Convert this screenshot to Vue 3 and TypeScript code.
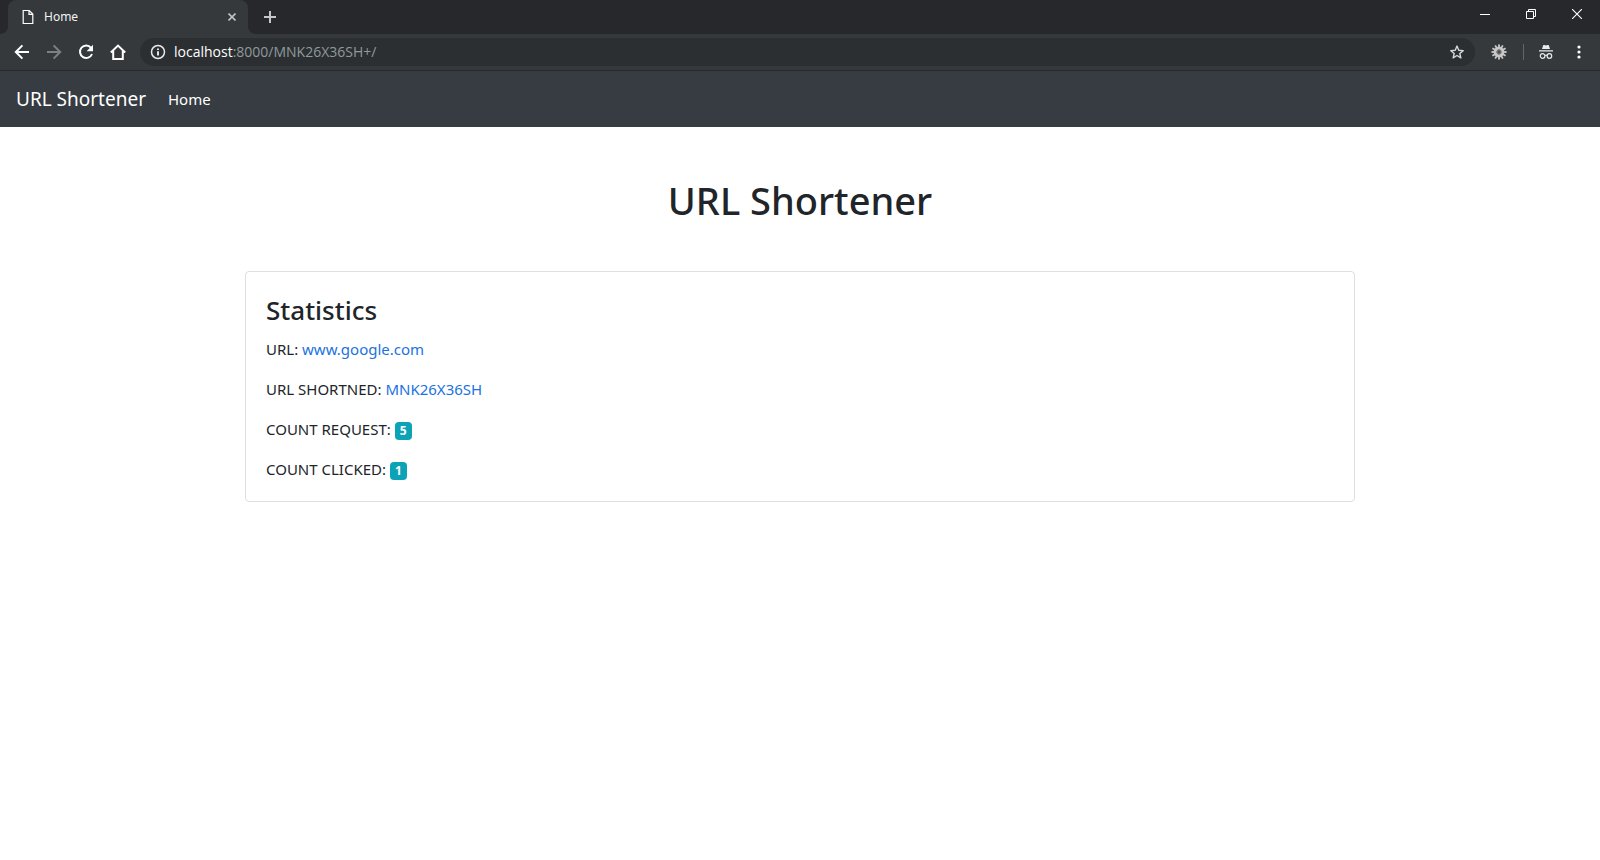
<script setup lang="ts">
import { ref } from 'vue'

interface Stat {
  label: string
  link?: string
  count?: number
}

const host = 'localhost'
const path = ':8000/MNK26X36SH+/'
const address = ref(host + path)

const stats: Stat[] = [
  { label: 'URL:', link: 'www.google.com' },
  { label: 'URL SHORTNED:', link: 'MNK26X36SH' },
  { label: 'COUNT REQUEST:', count: 5 },
  { label: 'COUNT CLICKED:', count: 1 },
]

const gearTeeth = Array.from({ length: 12 }, (_, i) => i * 30)
</script>

<template>
  <div class="browser">
    <header class="chrome">
      <div class="tab-strip">
        <div class="tab">
          <svg class="page-icon" width="12" height="16" viewBox="0 0 12 16" fill="none" stroke="#fff" stroke-width="1.2">
            <path d="M1.2 1.5h6l3.6 3.6v9.4H1.2zM7 1.5v3.8h3.8" />
          </svg>
          <span class="tab-title">Home</span>
          <button class="icon-button tab-close" aria-label="Close tab">
            <svg width="8" height="8" viewBox="0 0 8 8" stroke="#bfc2c5" stroke-width="1.6"><path d="M.5 .5l7 7M7.5 .5L.5 7.5" /></svg>
          </button>
        </div>
        <button class="icon-button new-tab" aria-label="New tab">
          <svg width="12" height="12" viewBox="0 0 12 12" stroke="#c5c8ca" stroke-width="2"><path d="M6 0v12M0 6h12" /></svg>
        </button>
        <div class="window-controls">
          <button class="icon-button" aria-label="Minimize">
            <svg width="10" height="10" viewBox="0 0 10 10" fill="none" stroke="#fff"><path d="M0 5.5h10" /></svg>
          </button>
          <button class="icon-button" aria-label="Restore">
            <svg width="10" height="10" viewBox="0 0 10 10" fill="none" stroke="#fff"><path d="M.5 2.5h7v7h-7zM2.5 2.5v-2h7v7h-2" /></svg>
          </button>
          <button class="icon-button" aria-label="Close">
            <svg width="10" height="10" viewBox="0 0 10 10" fill="none" stroke="#fff" stroke-width="1.1"><path d="M0 0l10 10M10 0L0 10" /></svg>
          </button>
        </div>
      </div>

      <div class="toolbar">
        <nav class="history" aria-label="Browser navigation">
          <button class="icon-button" aria-label="Back">
            <svg width="16" height="16" viewBox="0 0 16 16" fill="none" stroke="#fff" stroke-width="2"><path d="M15 8H2.4M8.4 1.4L1.8 8l6.6 6.6" /></svg>
          </button>
          <button class="icon-button" aria-label="Forward" disabled>
            <svg width="16" height="16" viewBox="0 0 16 16" fill="none" stroke="#7d8184" stroke-width="2"><path d="M1 8h12.6M7.6 1.4L14.2 8l-6.6 6.6" /></svg>
          </button>
          <button class="icon-button" aria-label="Reload">
            <svg width="16" height="16" viewBox="0 0 16 16" fill="none">
              <path d="M13 3.8A6.2 6.2 0 1 0 14 10" stroke="#fff" stroke-width="2" />
              <path d="M15 .8v6.4H8.6z" fill="#fff" />
            </svg>
          </button>
          <button class="icon-button" aria-label="Home page">
            <svg width="16" height="16" viewBox="0 0 16 16" fill="none" stroke="#fff" stroke-width="2"><path d="M.8 8.4L8 1.6l7.2 6.8M3.2 7v8h9.6V7" /></svg>
          </button>
        </nav>

        <div class="omnibox">
          <svg class="info-icon" width="16" height="16" viewBox="0 0 16 16" fill="none" stroke="#e8eaed">
            <circle cx="8" cy="8" r="6.5" stroke-width="1.5" />
            <path d="M8 7.2v4.2M8 4.4v1.6" stroke-width="1.9" />
          </svg>
          <label class="address">
            <span class="host" aria-hidden="true">{{ host }}</span><span class="path" aria-hidden="true">{{ path }}</span>
            <input v-model="address" class="address-input" type="text" aria-label="Address" />
          </label>
          <button class="icon-button star" aria-label="Bookmark this page">
            <svg width="14" height="14" viewBox="0 0 16 16" fill="none" stroke="#d5d7d9" stroke-width="1.6" stroke-linejoin="round">
              <path d="M8 1.2l2 4.8 5.1.4-3.9 3.3 1.2 5L8 12l-4.4 2.7 1.2-5L.9 6.4 6 6z" />
            </svg>
          </button>
        </div>

        <button class="icon-button gear" aria-label="Extension">
          <svg width="16" height="16" viewBox="0 0 16 16">
            <g fill="#c9c9c9">
              <rect v-for="angle in gearTeeth" :key="angle" x="7.1" y="0.4" width="1.8" height="4" :transform="`rotate(${angle} 8 8)`" />
            </g>
            <circle cx="8" cy="8" r="3.9" fill="none" stroke="#c8c8c8" stroke-width="3" />
            <circle cx="8" cy="8" r="2.2" fill="#4b4e50" stroke="#858789" />
          </svg>
        </button>
        <span class="divider"></span>
        <button class="icon-button incognito" aria-label="Incognito">
          <svg width="14" height="14" viewBox="0 0 14 14">
            <path d="M4.3 0h1.2L7 .6 8.5 0h1.2L11 4H3zM0 5.2h14v1.3H0z" fill="#e8eaed" />
            <g fill="none" stroke="#e8eaed" stroke-width="1.2"><circle cx="3.6" cy="11" r="2.3" /><circle cx="10.4" cy="11" r="2.3" /><path d="M5.9 10.6q1.1-.8 2.2 0" /></g>
          </svg>
        </button>
        <button class="icon-button menu" aria-label="Browser menu">
          <svg width="4" height="14" viewBox="0 0 4 14" fill="#fff"><circle cx="2" cy="2" r="1.6" /><circle cx="2" cy="7" r="1.6" /><circle cx="2" cy="12" r="1.6" /></svg>
        </button>
      </div>
    </header>

    <nav class="navbar" aria-label="Site">
      <a class="brand" href="#">URL Shortener</a>
      <a class="nav-link" href="#">Home</a>
    </nav>

    <main class="container">
      <h1>URL Shortener</h1>
      <section class="card">
        <h2>Statistics</h2>
        <p v-for="stat in stats" :key="stat.label">
          {{ stat.label }}
          <a v-if="stat.link" href="#">{{ stat.link }}</a>
          <span v-else class="badge">{{ stat.count }}</span>
        </p>
      </section>
    </main>
  </div>
</template>

<style>
body {
  background: #fff;
}
</style>

<style scoped>
* {
  box-sizing: border-box;
}

.browser {
  font-family: "Noto Sans", "Open Sans", sans-serif;
  font-size: 15px;
  line-height: 24px;
  color: #212529;
}

a {
  color: #1a73e0;
  text-decoration: none;
}

.icon-button {
  display: flex;
  align-items: center;
  justify-content: center;
  flex: none;
  padding: 0;
  border: 0;
  background: none;
}

.tab-strip {
  display: flex;
  height: 34px;
  padding-left: 8px;
  background: #26282b;
}

.tab {
  position: relative;
  display: flex;
  align-items: center;
  width: 240px;
  padding: 0 10px 0 14px;
  border-radius: 8px 8px 0 0;
  background: #35393c;
}

/* Outward curves at the foot of the active tab */
.tab::before,
.tab::after {
  content: "";
  position: absolute;
  bottom: 0;
  width: 8px;
  height: 8px;
}

.tab::before {
  right: 100%;
  background: radial-gradient(circle at 0 0, transparent 8px, #35393c 8px);
}

.tab::after {
  left: 100%;
  background: radial-gradient(circle at 100% 0, transparent 8px, #35393c 8px);
}

.tab-title {
  flex: 1;
  margin-left: 10px;
  font-size: 12px;
  color: #f1f3f4;
}

.tab-close {
  width: 12px;
  height: 16px;
}

.new-tab {
  width: 28px;
  margin-left: 8px;
}

.window-controls {
  display: flex;
  height: 28px;
  margin-left: auto;
}

.window-controls .icon-button {
  width: 46px;
}

.toolbar {
  display: flex;
  align-items: center;
  height: 37px;
  padding-right: 11px;
  border-bottom: 1px solid #27292c;
  background: #35393c;
}

.history {
  display: flex;
  gap: 16px;
  padding: 0 14px;
}

.omnibox {
  display: flex;
  flex: 1;
  align-items: center;
  height: 28px;
  padding: 0 11px 0 10px;
  border-radius: 14px;
  background: #2b2f31;
}

.address {
  position: relative;
  flex: 1;
  margin-left: 8px;
  font-family: "Open Sans", "Noto Sans", sans-serif;
  font-size: 14px;
  white-space: nowrap;
}

.host {
  color: #fff;
}

.path {
  color: #8f9a9d;
}

.address-input {
  position: absolute;
  inset: 0;
  width: 100%;
  padding: 0;
  border: 0;
  outline: 0;
  background: none;
  font: inherit;
  color: transparent;
}

.gear {
  margin-left: 16px;
}

.divider {
  width: 1px;
  height: 16px;
  margin: 0 15px 0 16px;
  background: #62666a;
}

.menu {
  width: 20px;
  margin-left: 16px;
}

.navbar {
  display: flex;
  align-items: center;
  gap: 22px;
  height: 56px;
  padding: 0 16px;
  background: #363c41;
}

.navbar a {
  color: #fff;
}

.brand {
  font-size: 19px;
}

.container {
  max-width: 1110px;
  margin: 0 auto;
}

h1 {
  margin: 49px 0 47px;
  font-size: 38px;
  font-weight: 500;
  line-height: 48px;
  text-align: center;
}

.card {
  padding: 20px;
  border: 1px solid #dfdfdf;
  border-radius: 4px;
}

h2 {
  margin: 0 0 9px;
  font-size: 26px;
  font-weight: 500;
  line-height: 36px;
}

p {
  margin: 0 0 16px;
}

p:last-child {
  margin: 0;
}

.badge {
  display: inline-block;
  padding: 3px 5px;
  border-radius: 4px;
  background: #0ba3b5;
  font-size: 12px;
  font-weight: 700;
  line-height: 12px;
  color: #fff;
}
</style>
